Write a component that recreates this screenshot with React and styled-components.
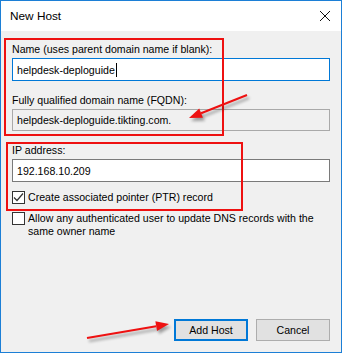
import React from 'react';
import styled, { createGlobalStyle } from 'styled-components';

const GlobalStyle = createGlobalStyle`
  body {
    margin: 0;
    background: #ffffff;
    font-family: "Liberation Sans", Arial, sans-serif;
  }
`

const Window = styled.div`
  position: relative;
  box-sizing: border-box;
  width: 342px;
  height: 353px;
  border: 1px solid #1c7fd6;
  display: flex;
  flex-direction: column;
  font-size: 10.6px;
  color: #000;
`

const TitleBar = styled.div`
  height: 30px;
  background: #fff;
  display: flex;
  align-items: center;
  justify-content: space-between;
  padding: 0 8px 0 9px;
`

const Title = styled.span`
  font-size: 11.8px;
`

const Close = styled.span`
  display: flex;
  width: 12px;
  height: 12px;
  margin-right: 2px;
`

const Body = styled.div`
  flex: 1;
  background: #f0f0f0;
  display: flex;
  flex-direction: column;
  padding: 11px 11px 11px 11px;
`

const Label = styled.div`
  line-height: 15px;
  margin-top: ${p => p.$gap || 0}px;
  margin-bottom: 1px;
  white-space: nowrap;
`

const Field = styled.div`
  box-sizing: border-box;
  height: ${p => p.$h || 23}px;
  display: flex;
  align-items: center;
  padding-left: 4px;
  background: ${p => (p.$disabled ? '#f0f0f0' : '#fff')};
  border: 1px solid ${p => (p.$focus ? '#0078d7' : p.$disabled ? '#a9a9a9' : '#7a7a7a')};
  white-space: nowrap;
`

const Caret = styled.span`
  display: inline-block;
  width: 1px;
  height: 14px;
  background: #000;
  margin-left: 1px;
`

const CheckRow = styled.label`
  display: flex;
  align-items: flex-start;
  gap: 3px;
  margin-top: ${p => p.$gap || 0}px;
  line-height: 13px;
`

const Box = styled.span`
  flex: none;
  box-sizing: border-box;
  width: 13px;
  height: 13px;
  margin-top: 0;
  border: 1px solid #333;
  background: #fff;
  display: flex;
  align-items: center;
  justify-content: center;
`

const Footer = styled.div`
  margin-top: auto;
  display: flex;
  justify-content: flex-end;
  gap: 8px;
`

const Button = styled.button`
  box-sizing: border-box;
  width: 74px;
  height: 22px;
  padding: 0;
  font: inherit;
  color: #000;
  background: #e1e1e1;
  border: ${p => (p.$primary ? '2px solid #0078d7' : '1px solid #adadad')};
`

const Annotation = styled.div`
  position: absolute;
  left: ${p => p.$x}px;
  top: ${p => p.$y}px;
  width: ${p => p.$w}px;
  height: ${p => p.$h}px;
  box-sizing: border-box;
  border: 2px solid #ee1111;
  pointer-events: none;
`

const Overlay = styled.svg`
  position: absolute;
  left: -1px;
  top: -1px;
  pointer-events: none;
`

const Check = ({ checked }) => (
  <Box>
    {checked && (
      <svg width="11" height="11" viewBox="0 0 11 11">
        <path d="M1 5.5 L4 8.5 L10 1.5" fill="none" stroke="#333" strokeWidth="1.2" />
      </svg>
    )}
  </Box>
)

const Arrow = ({ x1, y1, x2, y2 }) => {
  const a = Math.atan2(y2 - y1, x2 - x1);
  const len = 13;
  const w = 5;
  const bx = x2 - len * Math.cos(a);
  const by = y2 - len * Math.sin(a);
  const px = -Math.sin(a) * w;
  const py = Math.cos(a) * w;
  const head = `${x2},${y2} ${bx + px},${by + py} ${bx - px},${by - py}`;
  return (
    <g>
      <g transform="translate(2 3)" opacity="0.35" filter="url(#blur)">
        <line x1={x1} y1={y1} x2={bx} y2={by} stroke="#000" strokeWidth="2" />
        <polygon points={head} fill="#000" />
      </g>
      <line x1={x1} y1={y1} x2={bx} y2={by} stroke="#ee1111" strokeWidth="2" />
      <polygon points={head} fill="#ee1111" />
    </g>
  );
}

export default function App() {
  return (
    <>
      <GlobalStyle />
      <Window>
        <TitleBar>
          <Title>New Host</Title>
          <Close>
            <svg width="12" height="12" viewBox="0 0 12 12">
              <path d="M1 1 L11 11 M11 1 L1 11" stroke="#111" strokeWidth="1" />
            </svg>
          </Close>
        </TitleBar>
        <Body>
          <Label>Name (uses parent domain name if blank):</Label>
          <Field $focus>helpdesk-deploguide<Caret /></Field>
          <Label $gap={12}>Fully qualified domain name (FQDN):</Label>
          <Field $disabled $h={22}>helpdesk-deploguide.tikting.com.</Field>
          <Label $gap={12}>IP address:</Label>
          <Field>192.168.10.209</Field>
          <CheckRow $gap={9}>
            <Check checked />
            <span>Create associated pointer (PTR) record</span>
          </CheckRow>
          <CheckRow $gap={8}>
            <Check />
            <span>Allow any authenticated user to update DNS records with the same owner name</span>
          </CheckRow>
          <Footer>
            <Button $primary>Add Host</Button>
            <Button>Cancel</Button>
          </Footer>
        </Body>
        <Annotation $x={3} $y={37} $w={220} $h={98} />
        <Annotation $x={5} $y={141} $w={237} $h={69} />
        <Overlay width="343" height="355">
          <defs>
            <filter id="blur" x="-20%" y="-50%" width="140%" height="200%">
              <feGaussianBlur stdDeviation="1.5" />
            </filter>
          </defs>
          <Arrow x1={247} y1={95} x2={189} y2={118} />
          <Arrow x1={87} y1={338} x2={169} y2={324} />
        </Overlay>
      </Window>
    </>
  );
}
